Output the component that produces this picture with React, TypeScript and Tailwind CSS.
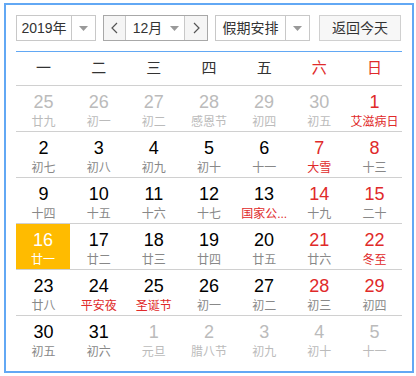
import React from 'react';

type Day = { d: number; l: string; other?: boolean; red?: boolean; lred?: boolean; today?: boolean };

const weeks: Day[][] = [
  [
    { d: 25, l: '廿九', other: true },
    { d: 26, l: '初一', other: true },
    { d: 27, l: '初二', other: true },
    { d: 28, l: '感恩节', other: true },
    { d: 29, l: '初四', other: true },
    { d: 30, l: '初五', other: true },
    { d: 1, l: '艾滋病日', red: true, lred: true },
  ],
  [
    { d: 2, l: '初七' },
    { d: 3, l: '初八' },
    { d: 4, l: '初九' },
    { d: 5, l: '初十' },
    { d: 6, l: '十一' },
    { d: 7, l: '大雪', red: true, lred: true },
    { d: 8, l: '十三', red: true },
  ],
  [
    { d: 9, l: '十四' },
    { d: 10, l: '十五' },
    { d: 11, l: '十六' },
    { d: 12, l: '十七' },
    { d: 13, l: '国家公...', lred: true },
    { d: 14, l: '十九', red: true },
    { d: 15, l: '二十', red: true },
  ],
  [
    { d: 16, l: '廿一', today: true },
    { d: 17, l: '廿二' },
    { d: 18, l: '廿三' },
    { d: 19, l: '廿四' },
    { d: 20, l: '廿五' },
    { d: 21, l: '廿六', red: true },
    { d: 22, l: '冬至', red: true, lred: true },
  ],
  [
    { d: 23, l: '廿八' },
    { d: 24, l: '平安夜', lred: true },
    { d: 25, l: '圣诞节', lred: true },
    { d: 26, l: '初一' },
    { d: 27, l: '初二' },
    { d: 28, l: '初三', red: true },
    { d: 29, l: '初四', red: true },
  ],
  [
    { d: 30, l: '初五' },
    { d: 31, l: '初六' },
    { d: 1, l: '元旦', other: true },
    { d: 2, l: '腊八节', other: true },
    { d: 3, l: '初九', other: true },
    { d: 4, l: '初十', other: true },
    { d: 5, l: '十一', other: true },
  ],
];

const heads = ['一', '二', '三', '四', '五', '六', '日'];

function Caret() {
  return (
    <svg width="9" height="5" viewBox="0 0 9 5">
      <path d="M0 0 H9 L4.5 5 Z" fill="#999" />
    </svg>
  );
}

function Chevron({ dir }: { dir: 'l' | 'r' }) {
  return (
    <svg width="7" height="12" viewBox="0 0 7 12">
      <polyline
        points={dir === 'l' ? '6,1 1,6 6,11' : '1,1 6,6 1,11'}
        fill="none"
        stroke="#555"
        strokeWidth="1.2"
      />
    </svg>
  );
}

export default function App() {
  return (
    <div className="ml-[4px] mt-[3px] w-[410px] h-[370px] border-2 border-[#62a8f4] bg-white p-[10px] font-['Liberation_Sans','Noto_Sans_CJK_SC',sans-serif]">
      <div className="flex h-[26px] items-stretch text-[14px] text-[#333]">
        <div className="flex w-[80px] border border-[#c8c8c8]">
          <div className="flex w-[55px] items-center justify-center border-r border-[#c8c8c8]">2019年</div>
          <div className="flex flex-1 items-center justify-center"><Caret /></div>
        </div>
        <div className="ml-[7px] flex w-[105px] border border-[#a8a8a8]">
          <div className="flex w-[22px] items-center justify-center border-r border-[#c8c8c8] bg-[#f5f5f5]"><Chevron dir="l" /></div>
          <div className="flex flex-1 items-center justify-center gap-[8px] pl-[2px]">
            <span>12月</span>
            <Caret />
          </div>
          <div className="flex w-[23px] items-center justify-center border-l border-[#c8c8c8] bg-[#f5f5f5]"><Chevron dir="r" /></div>
        </div>
        <div className="ml-[7px] flex w-[95px] border border-[#c8c8c8]">
          <div className="flex w-[70px] items-center justify-center border-r border-[#c8c8c8]">假期安排</div>
          <div className="flex flex-1 items-center justify-center"><Caret /></div>
        </div>
        <div className="ml-[9px] flex w-[82px] items-center justify-center border border-[#d0d0d0] bg-[#f7f7f7]">返回今天</div>
      </div>

      <div className="mt-[10px] border-t border-[#62a8f4]">
        <div className="grid h-[34px] grid-cols-7 border-b border-[#d0d0d0] text-[15px]">
          {heads.map((h, i) => (
            <div key={h} className={`flex items-center justify-center ${i >= 5 ? 'text-[#e02a2a]' : 'text-[#333]'}`}>
              {h}
            </div>
          ))}
        </div>
        {weeks.map((w, wi) => (
          <div key={wi} className={`grid h-[46px] grid-cols-7 ${wi < 5 ? 'border-b border-[#d0d0d0]' : ''}`}>
            {w.map((c, ci) => {
              const num = c.today
                ? 'text-white'
                : c.other
                ? 'text-[#bbb]'
                : c.red
                ? 'text-[#e02a2a]'
                : 'text-black';
              const lun = c.today
                ? 'text-white'
                : c.other
                ? 'text-[#bbb]'
                : c.lred
                ? 'text-[#e02a2a]'
                : 'text-[#888]';
              return (
                <div
                  key={ci}
                  className={`flex flex-col items-center pt-[6px] ${c.today ? 'mr-px bg-[#ffbb00]' : ''}`}
                >
                  <div className={`h-[20px] text-[18px] leading-[20px] ${num}`}>{c.d}</div>
                  <div className={`mt-[2px] whitespace-nowrap text-[12px] leading-[16px] ${lun}`}>{c.l}</div>
                </div>
              );
            })}
          </div>
        ))}
      </div>
    </div>
  );
}
